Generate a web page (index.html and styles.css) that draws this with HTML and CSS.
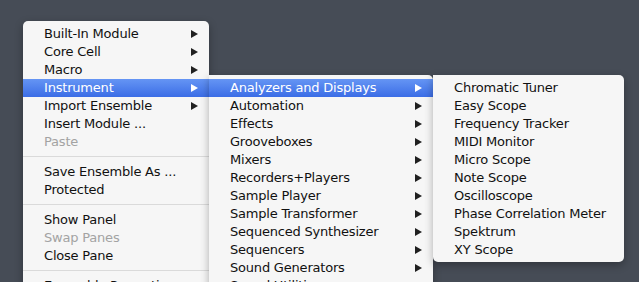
FILE: index.html
```html
<!DOCTYPE html>
<html lang="en">
<head>
  <meta charset="UTF-8" />
  <title>Menu</title>
  <link rel="stylesheet" href="styles.css">
</head>
<body>
  <div class="desk">
    <div class="menu main-menu">
      <div class="item sub">Built-In Module<span class="arrow"></span></div>
      <div class="item sub">Core Cell<span class="arrow"></span></div>
      <div class="item sub">Macro<span class="arrow"></span></div>
      <div class="item sub active">Instrument<span class="arrow"></span></div>
      <div class="item sub">Import Ensemble<span class="arrow"></span></div>
      <div class="item">Insert Module ...</div>
      <div class="item disabled">Paste</div>
      <div class="sep"></div>
      <div class="item">Save Ensemble As ...</div>
      <div class="item">Protected</div>
      <div class="sep"></div>
      <div class="item">Show Panel</div>
      <div class="item disabled">Swap Panes</div>
      <div class="item">Close Pane</div>
      <div class="sep"></div>
      <div class="item">Ensemble Properties ...</div>
      <div class="item">Save Snapshot</div>
    </div>

    <div class="menu sub-menu">
      <div class="item sub active">Analyzers and Displays<span class="arrow"></span></div>
      <div class="item sub">Automation<span class="arrow"></span></div>
      <div class="item sub">Effects<span class="arrow"></span></div>
      <div class="item sub">Grooveboxes<span class="arrow"></span></div>
      <div class="item sub">Mixers<span class="arrow"></span></div>
      <div class="item sub">Recorders+Players<span class="arrow"></span></div>
      <div class="item sub">Sample Player<span class="arrow"></span></div>
      <div class="item sub">Sample Transformer<span class="arrow"></span></div>
      <div class="item sub">Sequenced Synthesizer<span class="arrow"></span></div>
      <div class="item sub">Sequencers<span class="arrow"></span></div>
      <div class="item sub">Sound Generators<span class="arrow"></span></div>
      <div class="item sub">Sound Utilities<span class="arrow"></span></div>
      <div class="item sub">Synthesizers<span class="arrow"></span></div>
    </div>

    <div class="menu sub-menu last">
      <div class="item">Chromatic Tuner</div>
      <div class="item">Easy Scope</div>
      <div class="item">Frequency Tracker</div>
      <div class="item">MIDI Monitor</div>
      <div class="item">Micro Scope</div>
      <div class="item">Note Scope</div>
      <div class="item">Oscilloscope</div>
      <div class="item">Phase Correlation Meter</div>
      <div class="item">Spektrum</div>
      <div class="item">XY Scope</div>
    </div>
  </div>
</body>
</html>
```

FILE: styles.css
```css
body {
  margin: 0;
  background: #464c56;
  height: 282px;
  overflow: hidden;
  font-family: 'DejaVu Sans', sans-serif;
  font-size: 13px;
  letter-spacing: -0.2px;
}

.desk {
  display: flex;
  align-items: flex-start;
  padding: 21px 0 0 23px;
}

.menu {
  background: #f6f6f6;
  border-radius: 5px;
  padding: 4px 0;
  box-shadow: 0 3px 9px rgba(0, 0, 0, 0.3);
}

.main-menu {
  width: 186px;
}

.sub-menu {
  width: 224px;
  margin-top: 54px;
  border-top-left-radius: 0;
}

.sub-menu.last {
  width: 191px;
  padding-bottom: 3px;
}

.item {
  height: 18px;
  line-height: 18px;
  padding-left: 21px;
  color: #111;
  display: flex;
  align-items: center;
  white-space: nowrap;
}

.item.disabled {
  color: #a3a3a3;
}

.item.active {
  background: linear-gradient(#6595f4, #3b6de6);
  color: #fff;
}

.arrow {
  margin-left: auto;
  margin-right: 11px;
  width: 0;
  height: 0;
  border-top: 4.5px solid transparent;
  border-bottom: 4.5px solid transparent;
  border-left: 7px solid #202020;
}

.item.active .arrow {
  border-left-color: #fff;
}

.sep {
  height: 1px;
  background: #dadada;
  margin: 5px 0 6px;
}
```
